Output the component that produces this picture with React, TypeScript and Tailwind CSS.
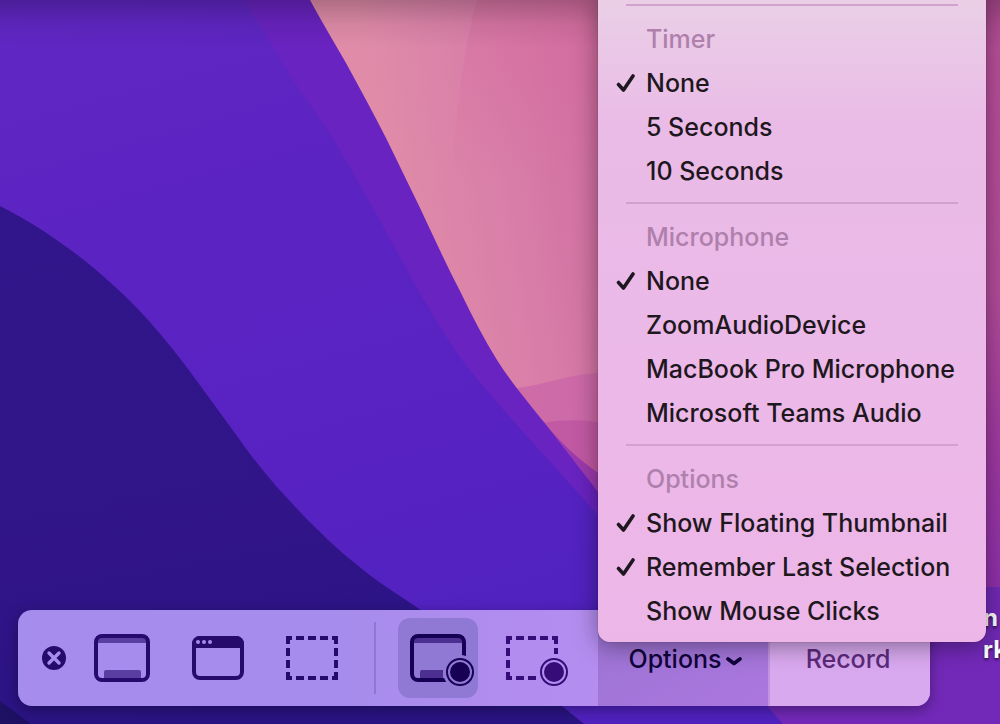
import { useState } from 'react';

const menuSections = [
  { title: 'Timer', items: ['None', '5 Seconds', '10 Seconds'] },
  {
    title: 'Microphone',
    items: ['None', 'ZoomAudioDevice', 'MacBook Pro Microphone', 'Microsoft Teams Audio'],
  },
  {
    title: 'Options',
    items: ['Show Floating Thumbnail', 'Remember Last Selection', 'Show Mouse Clicks'],
  },
];

const Wallpaper = () => (
  <svg
    className="absolute inset-0 w-full h-full"
    viewBox="0 0 1000 724"
    preserveAspectRatio="xMidYMid slice"
    aria-hidden="true"
  >
    <defs>
      <linearGradient id="pink" gradientUnits="userSpaceOnUse" x1="380" y1="150" x2="620" y2="110">
        <stop offset="0" stopColor="#e08ca8" />
        <stop offset="0.45" stopColor="#d97fa9" />
        <stop offset="1" stopColor="#cf6ba0" />
      </linearGradient>
      <linearGradient id="fold" gradientUnits="userSpaceOnUse" x1="0" y1="0" x2="0" y2="180">
        <stop offset="0" stopColor="#d56c9e" stopOpacity="0.5" />
        <stop offset="1" stopColor="#d56c9e" stopOpacity="0" />
      </linearGradient>
      <linearGradient id="edge" x1="0" y1="0" x2="0" y2="1">
        <stop offset="0" stopColor="#b9509a" />
        <stop offset="0.5" stopColor="#b44c9a" />
        <stop offset="0.75" stopColor="#a03aa2" />
        <stop offset="1" stopColor="#8f30ac" />
      </linearGradient>
      <linearGradient id="violet" x1="0" y1="0" x2="0.3" y2="1">
        <stop offset="0" stopColor="#6127c4" />
        <stop offset="0.35" stopColor="#5b23c2" />
        <stop offset="0.7" stopColor="#5822c2" />
        <stop offset="1" stopColor="#5022c0" />
      </linearGradient>
      <linearGradient id="indigo" x1="0" y1="0" x2="0.2" y2="1">
        <stop offset="0" stopColor="#31168b" />
        <stop offset="0.7" stopColor="#301488" />
        <stop offset="1" stopColor="#2a1484" />
      </linearGradient>
      <linearGradient id="topShade" x1="0" y1="0" x2="0" y2="1">
        <stop offset="0" stopColor="#000" stopOpacity="0.22" />
        <stop offset="0.5" stopColor="#000" stopOpacity="0.06" />
        <stop offset="1" stopColor="#000" stopOpacity="0" />
      </linearGradient>
    </defs>
    <rect width="1000" height="724" fill="url(#pink)" />
    <path d="M477 0C466 40 458 90 451 180H700V0Z" fill="url(#fold)" />
    <path d="M517 388C545 385 565 375 598 373L760 360V600H598Z" fill="#c65fa8" opacity="0.6" />
    <path d="M540 423Q570 418 598 422L760 430V600H598Z" fill="#bb4fa0" opacity="0.6" />
    <path d="M543 421C560 443 580 460 598 473L700 560H598Z" fill="#9c3aae" />
    <rect x="900" width="100" height="590" fill="url(#edge)" />
    <path
      d="M0 0H310C322 22 334 42 346 63C360 89 374 114 387 140L421 210C434 238 447 266 461 293C472 316 484 339 497 360C511 382 527 401 543 421L598 492L680 587H1000V724H0Z"
      fill="#6923c0"
    />
    <path
      d="M0 0H245C261 26 276 51 291 77L333 138C350 167 367 197 383 226L421 295C433 316 446 336 459 356C477 380 497 402 517 425L598 515L783 724H0Z"
      fill="url(#violet)"
    />
    <path d="M680 587H1000V724H783L700 630Z" fill="#7229b8" />
    <path
      d="M0 206C14 213 28 221 42 230C63 244 84 259 103 276C119 290 135 305 149 321C164 338 178 355 191 373L237 436C249 453 262 470 276 486C290 501 303 516 318 530C330 542 343 554 356 564C371 577 388 588 406 600L562 706L584 724H0Z"
      fill="url(#indigo)"
    />
    <path d="M0 701L31 724H0Z" fill="#1e1164" />
    <rect width="1000" height="48" fill="url(#topShade)" />
  </svg>
);

const CheckMark = () => (
  <svg width="20" height="20" viewBox="0 0 20 20" fill="none" aria-hidden="true">
    <path d="M2.5 11.5L7.5 17L17 3" stroke="#1f1720" strokeWidth="3.6" strokeLinecap="round" strokeLinejoin="round" />
  </svg>
);

const CloseIcon = () => (
  <svg width="24" height="24" viewBox="0 0 24 24" aria-hidden="true">
    <circle cx="12" cy="12" r="12" fill="#270b6c" />
    <path d="M7 7L17 17M17 7L7 17" stroke="#a68cec" strokeWidth="3.4" strokeLinecap="round" />
  </svg>
);

const ScreenIcon = () => (
  <svg width="80" height="80" viewBox="0 0 80 80" aria-hidden="true">
    <path d="M14 18H66V25H14ZM22 54a2 2 0 0 1 2-2H57a2 2 0 0 1 2 2V62H22Z" fill="#5b3ea2" />
    <rect x="14" y="18" width="52" height="44" rx="6" fill="none" stroke="#270b6c" strokeWidth="4" />
  </svg>
);

const WindowIcon = () => (
  <svg width="80" height="80" viewBox="0 0 80 80" aria-hidden="true">
    <rect x="16" y="20" width="48" height="40" rx="6" fill="none" stroke="#270b6c" strokeWidth="4" />
    <path d="M14 30V26a8 8 0 0 1 8-8H58a8 8 0 0 1 8 8V30Z" fill="#270b6c" />
    <g fill="#a68cec">
      <circle cx="20" cy="24" r="2" />
      <circle cx="26" cy="24" r="2" />
      <circle cx="32" cy="24" r="2" />
    </g>
  </svg>
);

const SelectionIcon = () => (
  <svg width="80" height="80" viewBox="0 0 80 80" aria-hidden="true">
    <g fill="none" stroke="#270b6c" strokeWidth="4">
      <path d="M14 26V20H18M58 20H62V26M62 54V60H58M18 60H14V54" />
      <path d="M22 20H30M34 20H42M46 20H54M22 60H30M34 60H42M46 60H54M14 30V38M14 42V50M62 30V38M62 42V50" />
    </g>
  </svg>
);

const RecordScreenIcon = () => (
  <svg width="80" height="80" viewBox="0 0 80 80" aria-hidden="true">
    <path d="M14 18H66V25H14ZM22 54a2 2 0 0 1 2-2H45V62H22Z" fill="#4c2f90" />
    <path d="M66 38V24a6 6 0 0 0-6-6H20a6 6 0 0 0-6 6V56a6 6 0 0 0 6 6H48" fill="none" stroke="#160254" strokeWidth="4" />
    <circle cx="62" cy="54" r="17" fill="#9079d5" />
    <circle cx="62" cy="54" r="13" fill="none" stroke="#160254" strokeWidth="2" />
    <circle cx="62" cy="54" r="10" fill="#160254" />
  </svg>
);

const RecordSelectionIcon = () => (
  <svg width="80" height="80" viewBox="0 0 80 80" aria-hidden="true">
    <g fill="none" stroke="#350c78" strokeWidth="4">
      <path d="M14 26V20H18M58 20H62V26M18 60H14V54" />
      <path d="M22 20H30M34 20H42M46 20H54M22 60H30M34 60H42M14 30V38M14 42V50M62 30V36" />
    </g>
    <circle cx="60" cy="54" r="13" fill="none" stroke="#350c78" strokeWidth="2" />
    <circle cx="60" cy="54" r="10" fill="#350c78" />
  </svg>
);

const captureModes = [
  { label: 'Capture Entire Screen', Icon: ScreenIcon },
  { label: 'Capture Selected Window', Icon: WindowIcon },
  { label: 'Capture Selected Portion', Icon: SelectionIcon },
];

export default function App() {
  const [timer, setTimer] = useState('None');
  const [microphone, setMicrophone] = useState('None');
  const [options, setOptions] = useState(['Show Floating Thumbnail', 'Remember Last Selection']);

  const isChecked = (section: string, item: string) => {
    if (section === 'Timer') return timer === item;
    if (section === 'Microphone') return microphone === item;
    return options.includes(item);
  };

  const handleSelect = (section: string, item: string) => {
    if (section === 'Timer') setTimer(item);
    else if (section === 'Microphone') setMicrophone(item);
    else setOptions(options.includes(item) ? options.filter((o) => o !== item) : [...options, item]);
  };

  return (
    <div className="relative min-h-screen overflow-hidden flex flex-col justify-end font-['Inter',sans-serif] font-[450] text-[25px] leading-8">
      <Wallpaper />

      {/* desktop file label, partly behind the menu */}
      <div className="absolute right-0 bottom-[58px] w-[17px] text-2xl leading-8 font-bold text-white [text-shadow:0_2px_3px_rgba(0,0,0,0.6)]">
        <p>n</p>
        <p>rk</p>
      </div>

      <div className="relative ml-[18px] mr-[70px] mb-[18px] h-24 flex items-center rounded-[14px] overflow-hidden bg-linear-to-r from-[#a68cec] from-35% to-[#b68df0] to-65% shadow-[0_4px_14px_rgba(0,0,0,0.35)]">
        <button className="ml-6 mr-4 shrink-0" aria-label="Close">
          <CloseIcon />
        </button>
        <div className="flex gap-4 shrink-0">
          {captureModes.map(({ label, Icon }) => (
            <button key={label} aria-label={label}>
              <Icon />
            </button>
          ))}
        </div>
        <div className="ml-5 mr-[22px] w-0.5 h-[72px] shrink-0 bg-[#9077d2]" />
        <div className="flex gap-4 mr-6 shrink-0">
          <button className="rounded-xl bg-[#9079d5]" aria-label="Record Entire Screen" aria-pressed="true">
            <RecordScreenIcon />
          </button>
          <button aria-label="Record Selected Portion">
            <RecordSelectionIcon />
          </button>
        </div>
        <button className="w-[170px] h-full shrink-0 flex items-center justify-center gap-1 pt-0.5 pl-1 bg-linear-to-br from-[#9b73d3] to-[#ab77df] text-[#10043c]" aria-haspopup="menu" aria-expanded="true">
          Options
          <svg width="16" height="10" viewBox="0 0 16 10" fill="none" className="mt-1" aria-hidden="true">
            <path d="M2 3L8 7.5L14 3" stroke="#10043c" strokeWidth="3.6" strokeLinecap="round" strokeLinejoin="round" />
          </svg>
        </button>
        <button className="flex-1 h-full pt-0.5 pr-1 border-l-2 border-[#c094e0] bg-[#d9a9ef] text-[#5c2a7c]">Record</button>
      </div>

      <div
        role="menu"
        className="absolute right-3.5 bottom-[82px] w-[388px] pb-[9px] rounded-b-[12px] bg-linear-to-b from-[#ead0e6] via-[#eabbe7] via-20% to-[#edb6e8] shadow-[0_4px_24px_rgba(0,0,0,0.4),0_0_1px_rgba(0,0,0,0.6)] text-[#1f1720]"
      >
        {menuSections.map((section) => (
          <div key={section.title} role="group" aria-label={section.title}>
            <div className="h-[22px] mx-7 pb-0.5 flex items-center">
              <div className="w-full h-0.5 bg-[#d0a2cd]" />
            </div>
            <p className="h-11 pl-12 flex items-center text-[#ae80ab]">{section.title}</p>
            {section.items.map((item) => (
              <button
                key={item}
                role={section.title === 'Options' ? 'menuitemcheckbox' : 'menuitemradio'}
                aria-checked={isChecked(section.title, item)}
                onClick={() => handleSelect(section.title, item)}
                className="w-full h-11 pl-[18px] flex items-center gap-2.5 text-left whitespace-nowrap"
              >
                <span className="w-5 shrink-0">{isChecked(section.title, item) && <CheckMark />}</span>
                {item}
              </button>
            ))}
          </div>
        ))}
      </div>
    </div>
  );
}
